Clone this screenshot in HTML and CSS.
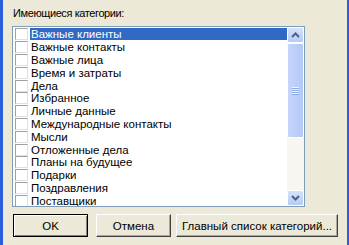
FILE: index.html
```html
<!DOCTYPE html>
<html>
<head>
<meta charset="utf-8">
<link rel="stylesheet" href="styles.css">
</head>
<body>
<div class="dialog">
  <div class="label">Имеющиеся категории:</div>
  <div class="listbox">
    <div class="items">
      <div class="row selected"><span class="cb"></span><span class="txt">Важные клиенты</span></div>
      <div class="row"><span class="cb"></span><span class="txt">Важные контакты</span></div>
      <div class="row"><span class="cb"></span><span class="txt">Важные лица</span></div>
      <div class="row"><span class="cb"></span><span class="txt">Время и затраты</span></div>
      <div class="row"><span class="cb"></span><span class="txt">Дела</span></div>
      <div class="row"><span class="cb"></span><span class="txt">Избранное</span></div>
      <div class="row"><span class="cb"></span><span class="txt">Личные данные</span></div>
      <div class="row"><span class="cb"></span><span class="txt">Международные контакты</span></div>
      <div class="row"><span class="cb"></span><span class="txt">Мысли</span></div>
      <div class="row"><span class="cb"></span><span class="txt">Отложенные дела</span></div>
      <div class="row"><span class="cb"></span><span class="txt">Планы на будущее</span></div>
      <div class="row"><span class="cb"></span><span class="txt">Подарки</span></div>
      <div class="row"><span class="cb"></span><span class="txt">Поздравления</span></div>
      <div class="row"><span class="cb"></span><span class="txt">Поставщики</span></div>
    </div>
    <div class="scrollbar">
      <div class="sbtn">
        <svg width="9" height="6" viewBox="0 0 9 6"><path d="M1 5 L4.5 1.5 L8 5" fill="none" stroke="#4D6185" stroke-width="2"/></svg>
      </div>
      <div class="thumb"><div class="grip"></div></div>
      <div class="track"></div>
      <div class="sbtn">
        <svg width="9" height="6" viewBox="0 0 9 6"><path d="M1 1 L4.5 4.5 L8 1" fill="none" stroke="#4D6185" stroke-width="2"/></svg>
      </div>
    </div>
  </div>
  <div class="buttons">
    <div class="btn default">OK</div>
    <div class="btn">Отмена</div>
    <div class="btn wide">Главный список категорий...</div>
  </div>
</div>
</body>
</html>
```
FILE: styles.css
```css
html, body {
  margin: 0;
  padding: 0;
  width: 349px;
  height: 245px;
  overflow: hidden;
  background: #ECE9D8;
}
.dialog {
  box-sizing: border-box;
  width: 349px;
  height: 245px;
  border-left: 3px solid #2A5EDB;
  border-right: 2px solid #2A5EDB;
  padding: 7px 0 0 9px;
  font-family: "Liberation Sans", Arial, sans-serif;
  font-size: 11.5px;
  color: #000;
}
.label {
  height: 12px;
  line-height: 12px;
  margin-left: 1px;
  font-size: 11px;
  letter-spacing: -0.4px;
}
.listbox {
  margin-top: 7px;
  width: 293px;
  height: 181px;
  box-sizing: border-box;
  border: 1px solid #7F9DB9;
  background: #fff;
  display: flex;
  overflow: hidden;
}
.items {
  flex: 1;
  padding-top: 1px;
  overflow: hidden;
}
.row {
  display: flex;
  align-items: center;
  height: 12.8px;
  line-height: 12px;
  white-space: nowrap;
}
.cb {
  box-sizing: border-box;
  width: 13px;
  height: 12px;
  margin-left: 2px;
  margin-right: 2px;
  border-top: 1px solid #A0A0A0;
  border-left: 1px solid #A0A0A0;
  border-right: 1px solid #E0E0E0;
  border-bottom: 1px solid #E0E0E0;
  background: #fff;
  flex: none;
}
.txt {
  flex: 1;
  padding-left: 1px;
}
.selected .txt {
  background: #316AC5;
  color: #fff;
}
.scrollbar {
  width: 17px;
  flex: none;
  display: flex;
  flex-direction: column;
  background: #F7F6F1;
}
.sbtn {
  height: 16px;
  box-sizing: border-box;
  border: 1px solid #fff;
  border-radius: 2px;
  background: linear-gradient(#D6E2FC, #B7CBF6);
  display: flex;
  align-items: center;
  justify-content: center;
  flex: none;
}
.thumb {
  height: 95px;
  box-sizing: border-box;
  border: 1px solid #fff;
  border-radius: 2px;
  background: linear-gradient(90deg, #C4D6FC, #B4C8F6);
  display: flex;
  align-items: center;
  justify-content: center;
  flex: none;
}
.grip {
  width: 7px;
  height: 8px;
  background: repeating-linear-gradient(#EEF3FE 0 1px, #8CA6DE 1px 2px);
}
.track {
  flex: 1;
}
.buttons {
  display: flex;
  margin-top: 7px;
  margin-left: 1px;
}
.btn {
  box-sizing: border-box;
  height: 23px;
  width: 75px;
  display: flex;
  align-items: center;
  justify-content: center;
  border-top: 1px solid #fff;
  border-left: 1px solid #fff;
  border-right: 1px solid #404040;
  border-bottom: 1px solid #404040;
  box-shadow: inset -1px -1px 0 #ACA899;
  background: #ECE9D8;
  margin-right: 7px;
}
.btn.default {
  border: 1px solid #000;
  box-shadow: inset 1px 1px 0 #fff, inset -1px -1px 0 #808080;
  margin-right: 8px;
}
.btn.wide {
  width: 162px;
  margin-right: 0;
  margin-left: -2px;
}
```
